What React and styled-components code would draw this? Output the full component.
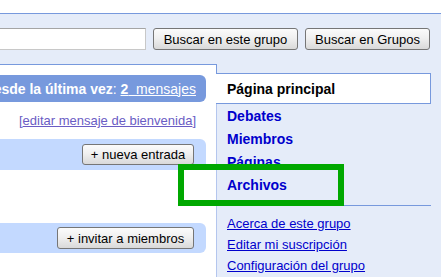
import React from 'react';
import styled, { createGlobalStyle } from 'styled-components';

const GlobalStyle = createGlobalStyle`
    html, body {
        margin: 0;
        padding: 0;
        background: #ffffff;
    }
    body {
        font-family: "Liberation Sans", Arial, sans-serif;
        font-size: 13px;
        color: #000;
    }
`
const Page = styled.div`
    position: relative;
    width: 441px;
    height: 277px;
    overflow: hidden;
    background: #ffffff;
`
const TopStrip = styled.div`
    height: 13px;
    background: #ffffff;
`
const Band = styled.div`
    border-top: 1px solid #7799dd;
    background: #e5ecf9;
    height: 263px;
    display: flex;
    flex-direction: column;
`
const SearchRow = styled.div`
    display: flex;
    align-items: center;
    gap: 7px;
    padding-top: 14px;
    height: 22px;
`
const SearchInput = styled.input`
    box-sizing: border-box;
    margin-left: -20px;
    width: 166px;
    height: 22px;
    border: 1px solid #c8c8c8;
    border-top-color: #a5a5a5;
    background: #fff;
    font-family: "Liberation Sans", Arial, sans-serif;
    font-size: 13px;
    outline: none;
`
const Button = styled.button`
    box-sizing: border-box;
    height: ${p => p.$h || 22}px;
    width: ${p => p.$w}px;
    padding: 0;
    border: 1px solid #767676;
    border-radius: 3px;
    background: linear-gradient(#fbfbfb, #f0f0f0 45%, #d9d9d9);
    font-family: "Liberation Sans", Arial, sans-serif;
    font-size: 13px;
    color: #000;
    white-space: nowrap;
`
const Body = styled.div`
    display: flex;
    margin-top: 14px;
    flex: 1;
`
const Main = styled.div`
    box-sizing: border-box;
    width: 217px;
    background: #ffffff;
    border-top: 1px solid #7799dd;
    border-right: 1px solid #b4c6ee;
    padding-right: 10px;
`
const HeaderBar = styled.div`
    margin-top: 10px;
    height: 27px;
    background: #7799dd;
    border-radius: 0 6px 6px 0;
    display: flex;
    align-items: center;
    justify-content: flex-end;
    overflow: hidden;
    white-space: nowrap;
    padding-right: 10px;
    color: #fff;
    font-size: 14px;
    font-weight: bold;
`
const Count = styled.a`
    color: #fff;
    text-decoration: underline;
    font-weight: ${p => (p.$bold ? 'bold' : 'normal')};
`
const Plain = styled.span`
    font-weight: normal;
`
const Welcome = styled.div`
    padding: 11px 10px 0 0;
    line-height: 16px;
    text-align: right;
    color: #6a5cc4;
    font-size: 13px;
`
const Visited = styled.a`
    color: #6a5cc4;
    text-decoration: underline;
`
const ActionBar = styled.div`
    box-sizing: border-box;
    margin-top: ${p => p.$top}px;
    height: ${p => p.$h}px;
    background: #c3d9ff;
    border-radius: 0 6px 6px 0;
    display: flex;
    align-items: center;
    justify-content: flex-end;
    padding-right: 12px;
`
const Nav = styled.div`
    flex: 1;
    display: flex;
    flex-direction: column;
`
const NavCap = styled.div`
    height: 9px;
    margin-left: -1px;
    border-left: 1px solid #7799dd;
`
const Tab = styled.div`
    box-sizing: border-box;
    height: 31px;
    margin-left: -1px;
    margin-right: 10px;
    background: #fff;
    border: 1px solid #7799dd;
    border-left: none;
    padding-left: 11px;
    display: flex;
    align-items: center;
    font-size: 14px;
    font-weight: bold;
    color: #000;
`
const NavList = styled.div`
    padding: 1px 0 0 10px;
    display: flex;
    flex-direction: column;
`
const NavItem = styled.a`
    line-height: 23px;
    font-size: 14px;
    font-weight: bold;
    color: #0000cc;
    text-decoration: none;
`
const Divider = styled.div`
    height: 1px;
    margin: 8px 10px 0 0;
    background: #7799dd;
`
const LinkList = styled.div`
    padding: 7px 0 0 10px;
    display: flex;
    flex-direction: column;
`
const SideLink = styled.a`
    line-height: 21px;
    font-size: 13px;
    color: #0000cc;
    text-decoration: underline;
`
const Highlight = styled.div`
    position: absolute;
    box-sizing: border-box;
    left: 178px;
    top: 164px;
    width: 166px;
    height: 42px;
    border: 6px solid #00a800;
    pointer-events: none;
`

export default function App() {
    return (
        <Page>
            <GlobalStyle />
            <TopStrip />
            <Band>
                <SearchRow>
                    <SearchInput type="text" />
                    <Button $w={145}>Buscar en este grupo</Button>
                    <Button $w={125}>Buscar en Grupos</Button>
                </SearchRow>
                <Body>
                    <Main>
                        <HeaderBar>
                            Mensajes nuevos desde la última vez<Plain>:</Plain>&nbsp;
                            <Count href="#" $bold>2</Count>
                            <Count href="#">&nbsp;&nbsp;mensajes</Count>
                        </HeaderBar>
                        <Welcome>
                            [<Visited href="#">editar mensaje de bienvenida</Visited>]
                        </Welcome>
                        <ActionBar $top={10} $h={31}>
                            <Button $w={112} $h={21}>+ nueva entrada</Button>
                        </ActionBar>
                        <ActionBar $top={53} $h={30}>
                            <Button $w={137}>+ invitar a miembros</Button>
                        </ActionBar>
                    </Main>
                    <Nav>
                        <NavCap />
                        <Tab>Página principal</Tab>
                        <NavList>
                            <NavItem href="#">Debates</NavItem>
                            <NavItem href="#">Miembros</NavItem>
                            <NavItem href="#">Páginas</NavItem>
                            <NavItem href="#">Archivos</NavItem>
                        </NavList>
                        <Divider />
                        <LinkList>
                            <SideLink href="#">Acerca de este grupo</SideLink>
                            <SideLink href="#">Editar mi suscripción</SideLink>
                            <SideLink href="#">Configuración del grupo</SideLink>
                        </LinkList>
                    </Nav>
                </Body>
            </Band>
            <Highlight />
        </Page>
    );
}
